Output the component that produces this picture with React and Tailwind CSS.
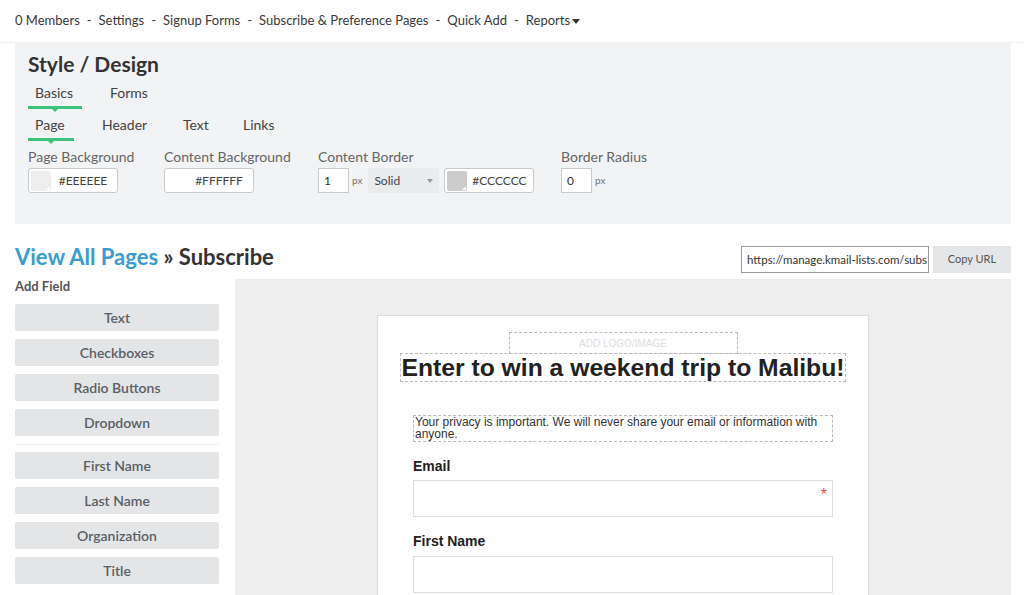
import React from 'react';

const navItems = ['0 Members', 'Settings', 'Signup Forms', 'Subscribe & Preference Pages', 'Quick Add'];

const fieldGroups = [
  ['Text', 'Checkboxes', 'Radio Buttons', 'Dropdown'],
  ['First Name', 'Last Name', 'Organization', 'Title'],
];

// green underline with a little notch under active tab
const ActiveBar = ({ width }) => (
  <div className="relative h-[3px] bg-[#3cc47c] mt-[4px]" style={{ width }}>
    <div className="absolute left-1/2 -translate-x-1/2 top-[2px] w-0 h-0 border-l-[4px] border-r-[4px] border-t-[4px] border-l-transparent border-r-transparent border-t-[#3cc47c]" />
  </div>
);

const ColorInput = ({ swatch, value, className = '' }) => (
  <div className={`flex items-center h-[25px] w-[90px] bg-white border border-[#c8cacc] rounded-[3px] ${className}`}>
    <div className="relative w-[20px] h-[20px] ml-[2px] rounded-[2px]" style={{ background: swatch }}>
      <div className="absolute right-[1px] bottom-[1px] w-0 h-0 border-l-[4px] border-b-[4px] border-l-transparent border-b-white" />
    </div>
    <span className="flex-1 text-center text-[12px] text-[#444] pr-[2px]">{value}</span>
  </div>
);

const NumInput = ({ value }) => (
  <div className="w-[31px] h-[25px] bg-white border border-[#c8cacc] text-[12px] text-[#333] px-[5px] leading-[23px]">{value}</div>
);

export default function App() {
  return (
    <div className="w-[1024px] h-[595px] overflow-hidden bg-white text-[#333] font-['Lato','Open_Sans',sans-serif]">
      {/* top nav */}
      <div className="flex items-center h-[43px] px-[15px] text-[13px] text-[#3a3a3a] border-b border-[#f1f1f1]">
        {navItems.map((n) => (
          <React.Fragment key={n}>
            <span>{n}</span>
            <span className="mx-[7px]">-</span>
          </React.Fragment>
        ))}
        <span className="flex items-center">Reports<span className="ml-[2px] w-0 h-0 border-l-[4px] border-r-[4px] border-t-[5px] border-l-transparent border-r-transparent border-t-[#333]" /></span>
      </div>

      {/* style / design panel */}
      <div className="ml-[15px] mr-[13px] h-[181px] bg-[#f2f3f4] px-[13px] pt-[8px]">
        <h1 className="text-[21px] font-bold text-[#333] leading-[26px]">Style / Design</h1>
        <div className="flex text-[14px] text-[#444] mt-[7px]">
          <div className="w-[82px] flex flex-col">
            <span className="pl-[7px] leading-[18px]">Basics</span>
            <ActiveBar width={54} />
          </div>
          <span className="leading-[18px]">Forms</span>
        </div>
        <div className="flex text-[14px] text-[#444] mt-[7px]">
          <div className="w-[74px] flex flex-col">
            <span className="pl-[7px] leading-[18px]">Page</span>
            <ActiveBar width={46} />
          </div>
          <span className="w-[81px] leading-[18px]">Header</span>
          <span className="w-[60px] leading-[18px]">Text</span>
          <span className="leading-[18px]">Links</span>
        </div>
        <div className="flex mt-[7px] text-[14px] text-[#666]">
          <div className="w-[136px]">
            <div className="leading-[18px]">Page Background</div>
            <ColorInput swatch="#eeeeee" value="#EEEEEE" className="mt-[2px]" />
          </div>
          <div className="w-[154px]">
            <div className="leading-[18px]">Content Background</div>
            <ColorInput swatch="#ffffff" value="#FFFFFF" className="mt-[2px]" />
          </div>
          <div className="w-[243px]">
            <div className="leading-[18px]">Content Border</div>
            <div className="flex items-center mt-[2px]">
              <NumInput value="1" />
              <span className="text-[10px] text-[#777] ml-[3px] mr-[6px]">px</span>
              <div className="flex items-center justify-between w-[71px] h-[25px] bg-[#eaebec] px-[6px] text-[12px] text-[#444]">
                <span>Solid</span>
                <span className="w-0 h-0 border-l-[3px] border-r-[3px] border-t-[4px] border-l-transparent border-r-transparent border-t-[#999]" />
              </div>
              <ColorInput swatch="#cccccc" value="#CCCCCC" className="ml-[5px] w-[89px]" />
            </div>
          </div>
          <div>
            <div className="leading-[18px]">Border Radius</div>
            <div className="flex items-center mt-[2px]">
              <NumInput value="0" />
              <span className="text-[10px] text-[#777] ml-[3px]">px</span>
            </div>
          </div>
        </div>
      </div>

      {/* page heading + url */}
      <div className="flex items-center justify-between pl-[15px] pr-[13px] mt-[21px] h-[28px]">
        <h2 className="text-[22px] font-bold leading-[26px] -mt-[4px]">
          <span className="text-[#3a9bd5]">View All Pages</span>
          <span className="text-[#333]"> » Subscribe</span>
        </h2>
        <div className="flex items-center">
          <div className="w-[188px] h-[27px] border border-[#9a9a9a] bg-white text-[11.5px] text-[#333] px-[5px] leading-[25px] overflow-hidden whitespace-nowrap">https://manage.kmail-lists.com/subs</div>
          <div className="w-[78px] h-[27px] ml-[4px] bg-[#e4e6e8] text-[11px] text-[#555] flex items-center justify-center">Copy URL</div>
        </div>
      </div>

      {/* main */}
      <div className="flex mt-[6px] pl-[15px] pr-[13px]">
        <div className="w-[204px] shrink-0">
          <div className="text-[13px] font-bold text-[#555] leading-[16px] -mt-[1px]">Add Field</div>
          {fieldGroups.map((g, gi) => (
            <div key={gi} className={gi === 0 ? 'mt-[10px] pb-[8px] border-b border-[#f0f0f0]' : 'mt-[7px]'}>
              {g.map((f, i) => (
                <div key={f} className={`h-[27px] bg-[#e3e5e7] rounded-[2px] flex items-center justify-center text-[14px] font-semibold text-[#5a5f66] ${i > 0 ? 'mt-[8px]' : ''}`}>{f}</div>
              ))}
            </div>
          ))}
        </div>

        {/* preview */}
        <div className="flex-1 ml-[16px] bg-[#eeeeee] h-[320px] pt-[36px] flex justify-center">
          <div className="w-[492px] bg-white border border-[#dcdcdc] border-b-0 font-['Liberation_Sans',Arial,sans-serif] text-[#222]">
            <div className="flex justify-center mt-[16px]">
              <div className="w-[229px] h-[22px] border border-dashed border-[#bbb] text-[10px] text-[#ddd] flex items-center justify-center">ADD LOGO/IMAGE</div>
            </div>
            <div className="mx-[22px] h-[29px] border border-dashed border-[#bbb] flex items-center justify-center mt-[-1px]">
              <span className="text-[24.7px] font-bold text-[#222] leading-[28px] whitespace-nowrap">Enter to win a weekend trip to Malibu!</span>
            </div>
            <div className="mx-[35px] mt-[33px] border border-dashed border-[#bbb] text-[12px] text-[#333] leading-[12px] px-[1px] pt-[0px] pb-[1px]">
              Your privacy is important. We will never share your email or information with anyone.
            </div>
            <div className="mx-[35px] mt-[16px]">
              <div className="text-[14px] font-bold leading-[16px]">Email</div>
              <div className="relative h-[37px] mt-[6px] border border-[#ddd]">
                <span className="absolute right-[5px] top-[2px] text-[16px] text-[#e05555]">*</span>
              </div>
              <div className="text-[14px] font-bold leading-[16px] mt-[16px]">First Name</div>
              <div className="h-[37px] mt-[7px] border border-[#ddd]" />
            </div>
          </div>
        </div>
      </div>
    </div>
  );
}
